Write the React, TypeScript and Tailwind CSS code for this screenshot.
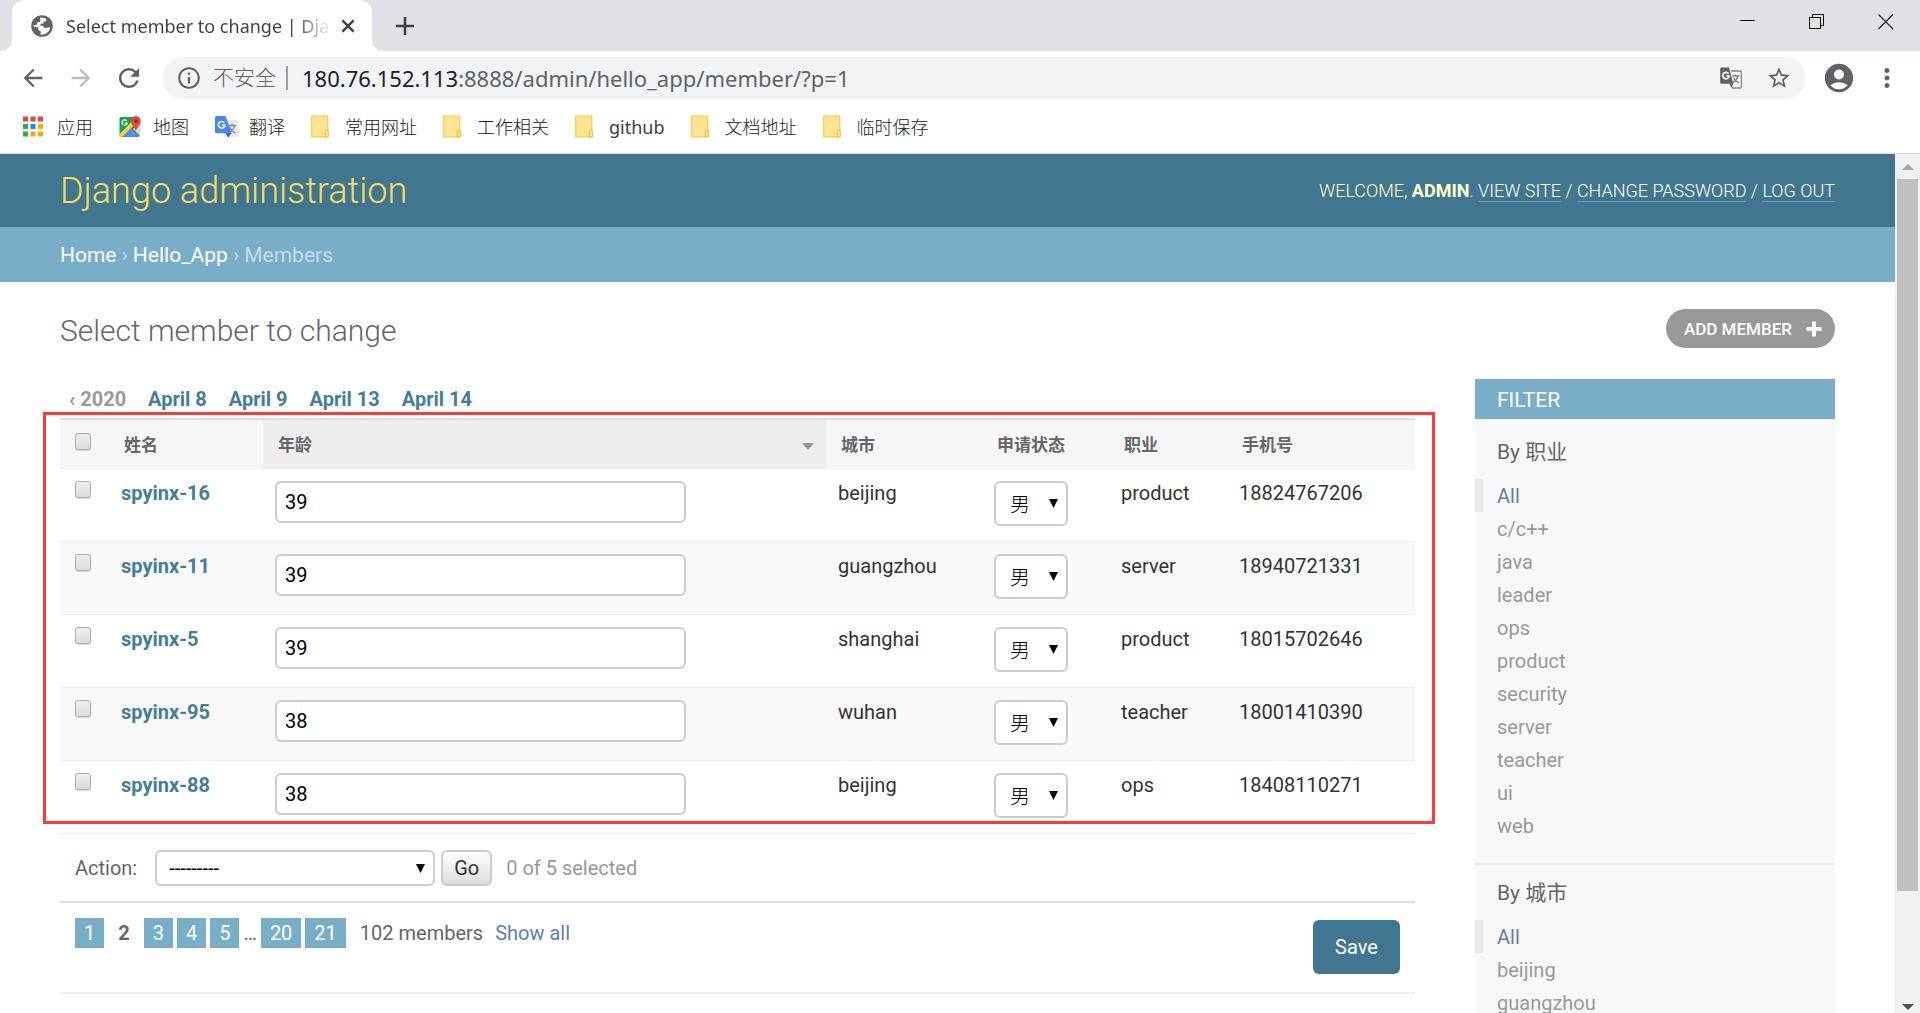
import type { ReactNode } from "react";
import {
  MdArrowBack,
  MdArrowForward,
  MdRefresh,
  MdInfoOutline,
  MdStarBorder,
  MdAccountCircle,
  MdMoreVert,
} from "react-icons/md";

const members = [
  { name: "spyinx-16", age: 39, city: "beijing", job: "product", phone: "18824767206" },
  { name: "spyinx-11", age: 39, city: "guangzhou", job: "server", phone: "18940721331" },
  { name: "spyinx-5", age: 39, city: "shanghai", job: "product", phone: "18015702646" },
  { name: "spyinx-95", age: 38, city: "wuhan", job: "teacher", phone: "18001410390" },
  { name: "spyinx-88", age: 38, city: "beijing", job: "ops", phone: "18408110271" },
];

const jobs = ["All", "c/c++", "java", "leader", "ops", "product", "security", "server", "teacher", "ui", "web"];
const cities = ["All", "beijing", "guangzhou"];

/* ---------- icons ---------- */

function GlobeIcon() {
  return (
    <svg viewBox="0 0 22 22" className="h-[22px] w-[22px] shrink-0">
      <circle cx="11" cy="11" r="10.8" fill="#5f6368" />
      <path
        d="M9 2.6 L14.6 3.2 L15.4 5.4 L13 7 L12.2 8.6 L9.8 8.8 L9.2 10.4 L12 11 L13.8 13.2 L16.6 12.6 L19.4 12.4 A8.8 8.8 0 0 1 9.4 19.6 L10 16.8 L7.4 15 L7.2 12.4 L3 11.8 L2.2 10.2 L5.4 10.2 L6.2 7.6 L9.4 6.6 Z"
        fill="#fff"
      />
    </svg>
  );
}

function AppsIcon() {
  const colors = ["#ea4335", "#ea4335", "#ea4335", "#34a853", "#1a8cff", "#f9ab00", "#34a853", "#f9ab00", "#f9ab00"];
  return (
    <svg viewBox="0 0 24 24" className="h-6 w-6">
      {colors.map((c, i) => (
        <rect key={i} x={(i % 3) * 7.5} y={1.5 + Math.floor(i / 3) * 7.5} width="5" height="5" fill={c} />
      ))}
    </svg>
  );
}

function MapsIcon() {
  return (
    <svg viewBox="0 0 24 24" className="h-6 w-6">
      <rect x="0.5" y="2" width="20" height="20" rx="1.5" fill="#1e9e58" />
      <path d="M20.5 7 V20.5 L14 14 Z" fill="#d7dbdf" />
      <path d="M1 21.5 L11 12.2 L20 21.8 Z" fill="#4f8df5" />
      <path d="M0.5 19 L14.5 5 L17 8.2 L3 22 H1.8 Q0.5 22 0.5 20.5 Z" fill="#fbd13d" />
      <path d="M4 22 L10.6 15.2 L17.4 22 Z" fill="#4f8df5" />
      <path d="M7.6 5.7 A2.6 2.6 0 1 0 8.2 8 H5.8" fill="none" stroke="#fff" strokeWidth="1.2" />
      <path d="M16.8 17 C16.4 12.6 12 10.4 12 6 A4.9 4.9 0 0 1 21.8 6 C21.8 10.4 17.2 12.6 16.8 17 Z" fill="#e24a3d" />
      <circle cx="16.9" cy="6" r="1.8" fill="#8c2a22" />
    </svg>
  );
}

function TranslateIcon() {
  return (
    <svg viewBox="0 0 24 24" className="h-6 w-6">
      <rect x="9" y="5" width="14" height="17" rx="1.5" fill="#e4e6e8" />
      <path d="M13 10.5 H21 M17 9 V10.5 M19.4 10.5 C18.8 14 16.4 16.4 14 17.6 M14.6 12 C15.6 14.6 17.8 16.8 20.4 17.8" fill="none" stroke="#7b8a99" strokeWidth="1.4" />
      <path d="M10.5 18 H16.5 L13.2 22.4 Z" fill="#3a5bb8" />
      <path d="M1.5 1 H10.6 L16.5 18.2 H1.5 Q0 18.2 0 16.7 V2.5 Q0 1 1.5 1 Z" fill="#4a86f0" />
      <path d="M9.4 7.9 A3.3 3.3 0 1 0 10 10.2 H7" fill="none" stroke="#fff" strokeWidth="1.6" />
    </svg>
  );
}

function FolderIcon() {
  return (
    <svg viewBox="0 0 24 24" className="h-6 w-6">
      <path d="M0.7 1.2 H16.3 Q16.8 1.2 16.8 1.8 V21.9 H0.7 Z" fill="#fee592" stroke="#f5cf4e" strokeWidth="1.3" />
      <path d="M14.3 21.9 V16.6 Q14.3 15.2 15.8 15.2 Q17.4 15.2 17.4 16.6 V21.9 Z" fill="#fee592" stroke="#edc43b" strokeWidth="1.2" />
    </svg>
  );
}

function PageTranslateIcon() {
  return (
    <svg viewBox="0 0 22 22" className="h-[22px] w-[22px]">
      <path d="M11 4 H20 Q21.3 4 21.3 5.3 V19.7 Q21.3 21 20 21 H12.5 L10.6 17" fill="#fff" stroke="#80868b" strokeWidth="1.3" />
      <path d="M12 8.8 H19.6 M15.6 7.4 V8.8 M18 8.8 C17.4 11.6 15.4 14 12.8 15.4 M13.6 10.4 C14.6 12.8 16.6 15 18.8 16" fill="none" stroke="#6b7075" strokeWidth="1.3" />
      <path d="M1.4 0.4 H9 L13.4 16.8 H1.4 Q0.2 16.8 0.2 15.6 V1.6 Q0.2 0.4 1.4 0.4 Z" fill="#5f6368" />
      <path d="M8.6 6.7 A3.2 3.2 0 1 0 9.2 9 H6.2" fill="none" stroke="#fff" strokeWidth="1.7" />
      <path d="M9.2 17 H13.4 L11.6 20.4 Z" fill="#5f6368" />
    </svg>
  );
}

/* ---------- browser chrome ---------- */

function Bookmark({ icon, children }: { icon: ReactNode; children: ReactNode }) {
  return (
    <a href="#" className="flex items-center gap-2.5 whitespace-nowrap">
      {icon}
      <span>{children}</span>
    </a>
  );
}

function BrowserChrome() {
  return (
    <header className="shrink-0 border-b border-[#d9dadd] bg-white font-['Noto_Sans','Noto_Sans_CJK_SC',sans-serif]">
      {/* Tab strip */}
      <div className="flex h-[51px] items-stretch justify-between bg-[#dee1e6]">
        <div className="flex">
          <div className="w-3 bg-white">
            <div className="h-full rounded-br-xl bg-[#dee1e6]" />
          </div>
          <div className="flex w-[360px] items-center rounded-t-xl bg-white pr-4 pl-[19px]">
            <GlobeIcon />
            <span className="ml-[13px] w-[266px] bg-linear-to-r from-[#3c4043] from-86% to-transparent bg-clip-text text-lg whitespace-nowrap text-transparent">
              Select member to change | Dja
            </span>
            <button aria-label="Close tab" className="ml-[9px]">
              <svg viewBox="0 0 14 14" className="h-3.5 w-3.5">
                <path d="M1.4 1.4 L12.6 12.6 M12.6 1.4 L1.4 12.6" stroke="#3c4043" strokeWidth="2.4" />
              </svg>
            </button>
          </div>
          <div className="w-6 bg-white">
            <div className="h-full rounded-bl-xl bg-[#dee1e6]" />
          </div>
          <button aria-label="New tab">
            <svg viewBox="0 0 18 18" className="h-[18px] w-[18px]">
              <path d="M9 0 V18 M0 9 H18" stroke="#3c4043" strokeWidth="2.6" />
            </svg>
          </button>
        </div>
        <div className="flex items-start gap-[53px] pt-3.5 pr-[26px]">
          <button aria-label="Minimize">
            <svg viewBox="0 0 16 16" className="h-4 w-4">
              <path d="M0 6.5 H15" stroke="#000" />
            </svg>
          </button>
          <button aria-label="Restore">
            <svg viewBox="0 0 16 16" className="h-4 w-4" fill="none" stroke="#000">
              <path d="M0.5 3.5 H11.5 V14.5 H0.5 Z M3.5 3.5 V0.5 H14.5 V11.5 H11.5" />
            </svg>
          </button>
          <button aria-label="Close">
            <svg viewBox="0 0 16 16" className="h-4 w-4">
              <path d="M0.5 0.5 L15 15 M15 0.5 L0.5 15" stroke="#222" strokeWidth="1.1" />
            </svg>
          </button>
        </div>
      </div>

      {/* Toolbar */}
      <div className="flex h-[54px] items-center pr-[18px] pl-[19px]">
        <button aria-label="Back">
          <MdArrowBack className="h-7 w-7 text-[#5f6368]" />
        </button>
        <button aria-label="Forward" className="ml-5">
          <MdArrowForward className="h-7 w-7 text-[#babcbe]" />
        </button>
        <button aria-label="Reload" className="ml-[19px]">
          <MdRefresh className="h-[30px] w-[30px] text-[#5f6368]" />
        </button>
        <div className="ml-[18px] flex h-[42px] min-w-0 flex-1 items-center rounded-full bg-[#f1f3f4] pr-3.5 pl-3.5">
          <MdInfoOutline className="h-[26px] w-[26px] shrink-0 text-[#5f6368]" />
          <span className="ml-[11px] text-[21px] font-light whitespace-nowrap text-[#5f6368]">不安全</span>
          <span className="mr-3.5 ml-2.5 h-6 w-0.5 bg-[#9aa0a6]" />
          <span className="flex-1 text-[22px] whitespace-nowrap text-[#5f6368]">
            <span className="text-[#202124]">180.76.152.113</span>:8888/admin/hello_app/member/?p=1
          </span>
          <button aria-label="Translate this page">
            <PageTranslateIcon />
          </button>
          <button aria-label="Bookmark this page" className="ml-6">
            <MdStarBorder className="h-[26px] w-[26px] text-[#5f6368]" />
          </button>
        </div>
        <button aria-label="Profile" className="ml-4">
          <MdAccountCircle className="h-[34px] w-[34px] text-[#5f6368]" />
        </button>
        <button aria-label="Menu" className="ml-4">
          <MdMoreVert className="h-[30px] w-[30px] text-[#5f6368]" />
        </button>
      </div>

      {/* Bookmarks bar */}
      <nav className="flex h-12 items-center gap-[26px] px-[23px] pb-1 text-lg font-light text-[#202124]">
        <Bookmark icon={<AppsIcon />}>应用</Bookmark>
        <Bookmark icon={<MapsIcon />}>地图</Bookmark>
        <Bookmark icon={<TranslateIcon />}>翻译</Bookmark>
        <Bookmark icon={<FolderIcon />}>常用网址</Bookmark>
        <Bookmark icon={<FolderIcon />}>工作相关</Bookmark>
        <Bookmark icon={<FolderIcon />}>
          <span className="font-normal text-[#3c4043]">github</span>
        </Bookmark>
        <Bookmark icon={<FolderIcon />}>文档地址</Bookmark>
        <Bookmark icon={<FolderIcon />}>临时保存</Bookmark>
      </nav>
    </header>
  );
}

function Scrollbar() {
  return (
    <div className="flex w-[25px] shrink-0 flex-col bg-[#f1f1f1]">
      <div className="flex h-[25px] items-center justify-center">
        <svg viewBox="0 0 12 6" className="h-1.5 w-3">
          <path d="M0 6 L6 0 L12 6 Z" fill="#a3a3a3" />
        </svg>
      </div>
      <div className="mx-0.5 flex-13 bg-[#c1c1c1]" />
      <div className="flex-2" />
      <div className="flex h-3 items-center justify-center">
        <svg viewBox="0 0 12 6" className="h-1.5 w-3">
          <path d="M0 0 L6 6 L12 0 Z" fill="#505050" />
        </svg>
      </div>
    </div>
  );
}

/* ---------- admin page ---------- */

function Checkbox({ label }: { label: string }) {
  return (
    <input
      type="checkbox"
      aria-label={label}
      className="block h-[17px] w-4 appearance-none rounded-[3px] border border-[#adadad] bg-linear-to-b from-[#eeeeee] to-[#dcdcdc] shadow-[0_1px_1px_rgba(0,0,0,0.15)]"
    />
  );
}

function DownArrow({ className }: { className: string }) {
  return (
    <svg viewBox="0 0 9 9" className={`pointer-events-none absolute h-[9px] w-[9px] ${className}`}>
      <path d="M0 0 H9 L4.5 9 Z" fill="#000" />
    </svg>
  );
}

function UserLink({ children }: { children: ReactNode }) {
  return (
    <a href="#" className="border-b border-white/25 text-white">
      {children}
    </a>
  );
}

function MemberTable() {
  return (
    <div className="relative">
      <table className="w-full table-fixed border-collapse text-left">
        <colgroup>
          <col className="w-[49px]" />
          <col className="w-[154px]" />
          <col />
          <col className="w-[156px]" />
          <col className="w-[127px]" />
          <col className="w-[118px]" />
          <col className="w-[188px]" />
        </colgroup>
        <thead className="border-t-2 border-b border-t-[#dddddd] border-b-[#eeeeee] bg-[#f6f6f6] text-[17px] text-[#666666]">
          <tr className="h-[49px]">
            <th className="pt-[13px] pl-[15px] align-top">
              <Checkbox label="Select all" />
            </th>
            <th className="pt-0.5 pl-[15px] font-bold">姓名</th>
            <th className="bg-[#eeeeee] pt-0.5 pr-3 pl-[15px] font-bold">
              <div className="flex items-center justify-between">
                <span>年龄</span>
                <svg viewBox="0 0 12 7" className="mt-1 h-[7px] w-3">
                  <path d="M0 0 H12 L6 7 Z" fill="#999" />
                </svg>
              </div>
            </th>
            <th className="pt-0.5 pl-[15px] font-bold">城市</th>
            <th className="pt-0.5 pl-[15px] font-bold">申请状态</th>
            <th className="pt-0.5 pl-[15px] font-bold">职业</th>
            <th className="pt-0.5 pl-[15px] font-bold">手机号</th>
          </tr>
        </thead>
        <tbody>
          {members.map((m) => (
            <tr key={m.name} className="h-[73px] border-b border-[#eeeeee] align-top text-[#333333] even:bg-[#f9f9f9]">
              <td className="pt-3 pl-[15px]">
                <Checkbox label={`Select ${m.name}`} />
              </td>
              <th className="pt-3 pl-3 font-bold">
                <a href="#" className="text-[#447e9b]">
                  {m.name}
                </a>
              </th>
              <td className="pt-3 pl-3">
                <input
                  type="text"
                  aria-label={`年龄 ${m.name}`}
                  defaultValue={m.age}
                  className="block h-[42px] w-[411px] rounded-md border-2 border-[#cccccc] bg-white px-2 text-black"
                />
              </td>
              <td className="pt-3 pl-3">{m.city}</td>
              <td className="pt-3 pl-3">
                <div className="relative w-[74px]">
                  <select
                    aria-label={`申请状态 ${m.name}`}
                    className="block h-[45px] w-full appearance-none rounded-md border-2 border-[#cccccc] bg-white pt-1 pl-3.5 font-light text-black"
                  >
                    <option>男</option>
                    <option>女</option>
                  </select>
                  <DownArrow className="top-[18px] right-2.5" />
                </div>
              </td>
              <td className="pt-3 pl-3">{m.job}</td>
              <td className="pt-3 pl-3">{m.phone}</td>
            </tr>
          ))}
        </tbody>
      </table>
      {/* Highlight frame around the list */}
      <div className="pointer-events-none absolute -top-1.5 -right-5 bottom-2.5 -left-[17px] border-3 border-[#ff3838]" />
    </div>
  );
}

function PageLink({ children }: { children: ReactNode }) {
  return (
    <a href="#" className="flex h-[30px] items-center bg-[#79aec8] px-[9px] text-white">
      {children}
    </a>
  );
}

function FilterList({ title, items }: { title: string; items: string[] }) {
  return (
    <div className="border-b-2 border-[#eaeaea] pb-[21px]">
      <h3 className="px-[22px] pt-3 pb-[11px] text-[21px] leading-8 font-normal text-[#666666]">By {title}</h3>
      <ul>
        {items.map((item, i) => (
          <li key={item} className="flex h-[33px] items-center">
            {i === 0 && <span className="h-full w-2 bg-[#eaeaea]" />}
            <a href="#" className={i === 0 ? "pl-3.5 text-[#5b80b2]" : "pl-[22px] text-[#999999]"}>
              {item}
            </a>
          </li>
        ))}
      </ul>
    </div>
  );
}

function AdminPage() {
  return (
    <div className="min-w-0 flex-1 overflow-hidden font-[Roboto,'Noto_Sans_CJK_SC',sans-serif] text-xl leading-6">
      <div className="flex h-[73px] items-center justify-between bg-[#417690] px-[60px] text-[#ffffcc]">
        <h1 className="text-4xl font-light text-[#f5dd5d]">
          <a href="#">Django administration</a>
        </h1>
        <div className="text-lg leading-5 font-light uppercase">
          Welcome, <strong className="font-bold">admin</strong>. <UserLink>View site</UserLink> /{" "}
          <UserLink>Change password</UserLink> / <UserLink>Log out</UserLink>
        </div>
      </div>
      <nav className="flex h-[55px] items-center gap-[5px] bg-[#79aec8] px-[60px] text-[21px] text-[#c4dce8]">
        <a href="#" className="text-white">
          Home
        </a>
        <span>›</span>
        <a href="#" className="text-white">
          Hello_App
        </a>
        <span>›</span>
        <span>Members</span>
      </nav>

      <main className="px-[60px] pt-[27px]">
        <div className="flex h-[70px] items-start justify-between">
          <h2 className="pt-1 text-[30px] leading-9 font-light text-[#666666]">Select member to change</h2>
          <a
            href="#"
            className="flex h-[39px] items-center gap-3.5 rounded-full bg-[#999999] pr-[13px] pl-[18px] text-[17px] font-medium text-white uppercase"
          >
            Add member
            <svg viewBox="0 0 16 16" className="h-4 w-4">
              <path d="M8 0.5 V15.5 M0.5 8 H15.5" stroke="#fff" strokeWidth="4" />
            </svg>
          </a>
        </div>

        <div className="flex items-start gap-[60px]">
          <section className="min-w-0 flex-1">
            <div className="flex h-[39px] items-center gap-[22px] px-[9px] font-bold text-[#447e9b]">
              <a href="#" className="text-[#999999]">
                ‹ 2020
              </a>
              <a href="#">April 8</a>
              <a href="#">April 9</a>
              <a href="#">April 13</a>
              <a href="#">April 14</a>
            </div>

            <MemberTable />

            <div className="flex h-[67px] items-center px-[15px] pt-0.5">
              <label htmlFor="action" className="text-[#666666]">
                Action:
              </label>
              <div className="relative ml-[18px]">
                <select
                  id="action"
                  className="block h-9 w-[280px] appearance-none rounded-md border-2 border-[#cccccc] bg-white pl-3 text-black"
                >
                  <option>---------</option>
                  <option>Delete selected members</option>
                </select>
                <DownArrow className="top-3.5 right-2.5" />
              </div>
              <button className="ml-1.5 h-9 w-[51px] rounded-md border-2 border-[#cccccc] bg-linear-to-b from-white to-[#dddddd] text-[#333333]">
                Go
              </button>
              <span className="ml-3.5 text-[#999999]">0 of 5 selected</span>
            </div>

            <div className="flex h-[93px] items-start justify-between border-t-2 border-b-2 border-t-[#dddddd] border-b-[#eeeeee] px-[15px] pt-[15px] text-[#666666]">
              <div className="flex items-center gap-1">
                <PageLink>1</PageLink>
                <span className="px-2.5 font-bold">2</span>
                <PageLink>3</PageLink>
                <PageLink>4</PageLink>
                <PageLink>5</PageLink>
                <span>…</span>
                <PageLink>20</PageLink>
                <PageLink>21</PageLink>
                <span className="ml-2.5">102 members</span>
                <a href="#" className="ml-2 text-[#5b80b2]">
                  Show all
                </a>
              </div>
              <button className="mt-0.5 h-[54px] w-[87px] rounded-md bg-[#417690] text-white">Save</button>
            </div>
          </section>

          <aside className="w-[360px] shrink-0 bg-[#f8f8f8]">
            <h2 className="flex h-10 items-center bg-[#79aec8] px-[22px] pt-0.5 text-[21px] font-normal text-white uppercase">
              Filter
            </h2>
            <div className="pt-[5px]">
              <FilterList title="职业" items={jobs} />
              <FilterList title="城市" items={cities} />
            </div>
          </aside>
        </div>
      </main>
    </div>
  );
}

export default function App() {
  return (
    <div className="flex h-screen flex-col overflow-hidden bg-white">
      <BrowserChrome />
      <div className="flex min-h-0 flex-1">
        <AdminPage />
        <Scrollbar />
      </div>
    </div>
  );
}
